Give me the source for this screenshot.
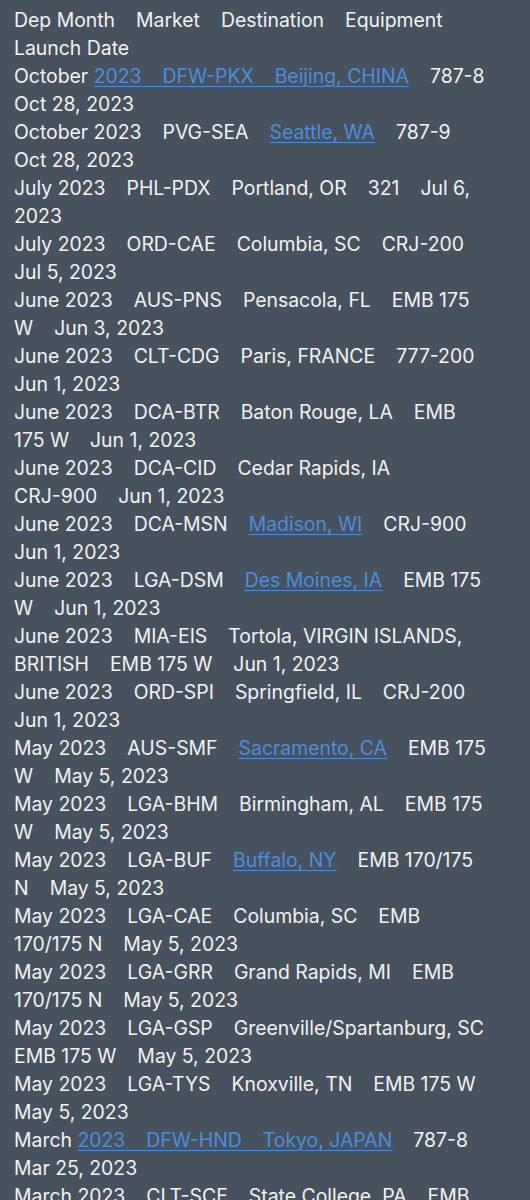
type Seg = string | { link: string[] };

const rows: Seg[][] = [
  ['Dep Month', 'Market', 'Destination', 'Equipment'],
  ['Launch Date'],
  ['October', { link: ['2023', 'DFW-PKX', 'Beijing, CHINA'] }, '787-8'],
  ['Oct 28, 2023'],
  ['October 2023', 'PVG-SEA', { link: ['Seattle, WA'] }, '787-9'],
  ['Oct 28, 2023'],
  ['July 2023', 'PHL-PDX', 'Portland, OR', '321', 'Jul 6,'],
  ['2023'],
  ['July 2023', 'ORD-CAE', 'Columbia, SC', 'CRJ-200'],
  ['Jul 5, 2023'],
  ['June 2023', 'AUS-PNS', 'Pensacola, FL', 'EMB 175'],
  ['W', 'Jun 3, 2023'],
  ['June 2023', 'CLT-CDG', 'Paris, FRANCE', '777-200'],
  ['Jun 1, 2023'],
  ['June 2023', 'DCA-BTR', 'Baton Rouge, LA', 'EMB'],
  ['175 W', 'Jun 1, 2023'],
  ['June 2023', 'DCA-CID', 'Cedar Rapids, IA'],
  ['CRJ-900', 'Jun 1, 2023'],
  ['June 2023', 'DCA-MSN', { link: ['Madison, WI'] }, 'CRJ-900'],
  ['Jun 1, 2023'],
  ['June 2023', 'LGA-DSM', { link: ['Des Moines, IA'] }, 'EMB 175'],
  ['W', 'Jun 1, 2023'],
  ['June 2023', 'MIA-EIS', 'Tortola, VIRGIN ISLANDS,'],
  ['BRITISH', 'EMB 175 W', 'Jun 1, 2023'],
  ['June 2023', 'ORD-SPI', 'Springfield, IL', 'CRJ-200'],
  ['Jun 1, 2023'],
  ['May 2023', 'AUS-SMF', { link: ['Sacramento, CA'] }, 'EMB 175'],
  ['W', 'May 5, 2023'],
  ['May 2023', 'LGA-BHM', 'Birmingham, AL', 'EMB 175'],
  ['W', 'May 5, 2023'],
  ['May 2023', 'LGA-BUF', { link: ['Buffalo, NY'] }, 'EMB 170/175'],
  ['N', 'May 5, 2023'],
  ['May 2023', 'LGA-CAE', 'Columbia, SC', 'EMB'],
  ['170/175 N', 'May 5, 2023'],
  ['May 2023', 'LGA-GRR', 'Grand Rapids, MI', 'EMB'],
  ['170/175 N', 'May 5, 2023'],
  ['May 2023', 'LGA-GSP', 'Greenville/Spartanburg, SC'],
  ['EMB 175 W', 'May 5, 2023'],
  ['May 2023', 'LGA-TYS', 'Knoxville, TN', 'EMB 175 W'],
  ['May 5, 2023'],
  ['March', { link: ['2023', 'DFW-HND', 'Tokyo, JAPAN'] }, '787-8'],
  ['Mar 25, 2023'],
  ['March 2023', 'CLT-SCE', 'State College, PA', 'EMB'],
];

function Tab() {
  return <span className="tracking-[-0.2px]">{'    '}</span>;
}

function Row({ segs }: { segs: Seg[] }) {
  return (
    <div className="whitespace-pre h-[28px]">
      {segs.map((s, i) => {
        // a month followed by a link is joined with a plain space
        const sep = i === 0 ? null : typeof s !== 'string' && i === 1 ? ' ' : <Tab />;
        if (typeof s === 'string') {
          return (
            <span key={i}>
              {sep}
              {s}
            </span>
          );
        }
        return (
          <span key={i}>
            {sep}
            <span className="text-[#4a8fdc] underline decoration-1 underline-offset-[3px]">
              {s.link.map((l, j) => (
                <span key={j}>
                  {j > 0 && <Tab />}
                  {l}
                </span>
              ))}
            </span>
          </span>
        );
      })}
    </div>
  );
}

export default function App() {
  return (
    <div className="w-[530px] h-[1200px] overflow-hidden bg-[#47525f] text-[#f1f3f6] px-[14px] pt-[6px] text-[19.4px] leading-[28px] font-['Inter',sans-serif]">
      {rows.map((r, i) => (
        <Row key={i} segs={r} />
      ))}
    </div>
  );
}
